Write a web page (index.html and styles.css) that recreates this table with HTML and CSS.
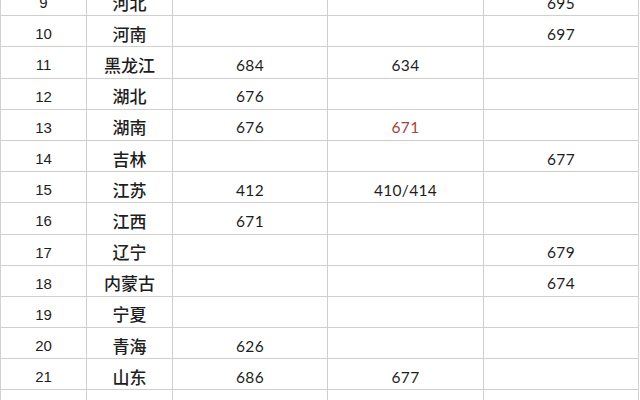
FILE: index.html
```html
<!DOCTYPE html>
<html lang="zh">
<head>
<meta charset="utf-8">
<link rel="stylesheet" href="styles.css">
</head>
<body>
<div class="sheet">
  <div class="grid">
    <div class="c n">9</div><div class="c p">河北</div><div class="c v"></div><div class="c v"></div><div class="c v">695</div>
    <div class="c n">10</div><div class="c p">河南</div><div class="c v"></div><div class="c v"></div><div class="c v">697</div>
    <div class="c n">11</div><div class="c p">黑龙江</div><div class="c v">684</div><div class="c v">634</div><div class="c v"></div>
    <div class="c n">12</div><div class="c p">湖北</div><div class="c v">676</div><div class="c v"></div><div class="c v"></div>
    <div class="c n">13</div><div class="c p">湖南</div><div class="c v">676</div><div class="c v red">671</div><div class="c v"></div>
    <div class="c n">14</div><div class="c p">吉林</div><div class="c v"></div><div class="c v"></div><div class="c v">677</div>
    <div class="c n">15</div><div class="c p">江苏</div><div class="c v">412</div><div class="c v">410/414</div><div class="c v"></div>
    <div class="c n">16</div><div class="c p">江西</div><div class="c v">671</div><div class="c v"></div><div class="c v"></div>
    <div class="c n">17</div><div class="c p">辽宁</div><div class="c v"></div><div class="c v"></div><div class="c v">679</div>
    <div class="c n">18</div><div class="c p">内蒙古</div><div class="c v"></div><div class="c v"></div><div class="c v">674</div>
    <div class="c n">19</div><div class="c p">宁夏</div><div class="c v"></div><div class="c v"></div><div class="c v"></div>
    <div class="c n">20</div><div class="c p">青海</div><div class="c v">626</div><div class="c v"></div><div class="c v"></div>
    <div class="c n">21</div><div class="c p">山东</div><div class="c v">686</div><div class="c v">677</div><div class="c v"></div>
    <div class="c n">22</div><div class="c p">山西</div><div class="c v">668</div><div class="c v">658</div><div class="c v"></div>
  </div>
</div>
</body>
</html>
```
FILE: styles.css
```css
html, body {
  margin: 0;
  padding: 0;
  background: #ffffff;
  overflow: hidden;
}
.sheet {
  width: 640px;
  height: 400px;
  overflow: hidden;
}
.grid {
  margin-top: -15px;
  display: grid;
  grid-template-columns: 86px 86px 155px 156px 155px;
  grid-auto-rows: 31.2px;
  border-left: 1px solid #d2d2d2;
  width: 638px;
}
.c {
  box-sizing: border-box;
  border-right: 1px solid #cfcfcf;
  border-bottom: 1px solid #cfcfcf;
  display: flex;
  align-items: center;
  justify-content: center;
  padding-top: 5px;
  color: #1e1e1e;
}
.n {
  font-family: "Liberation Sans", Arial, sans-serif;
  font-size: 15px;
}
.p {
  font-family: "Noto Sans CJK SC", sans-serif;
  font-size: 17px;
  font-weight: 500;
  padding-top: 4px;
}
.v {
  font-family: "Lato", "Liberation Sans", sans-serif;
  font-size: 15.5px;
  letter-spacing: 0.3px;
}
.red {
  color: #a5413c;
}
```
